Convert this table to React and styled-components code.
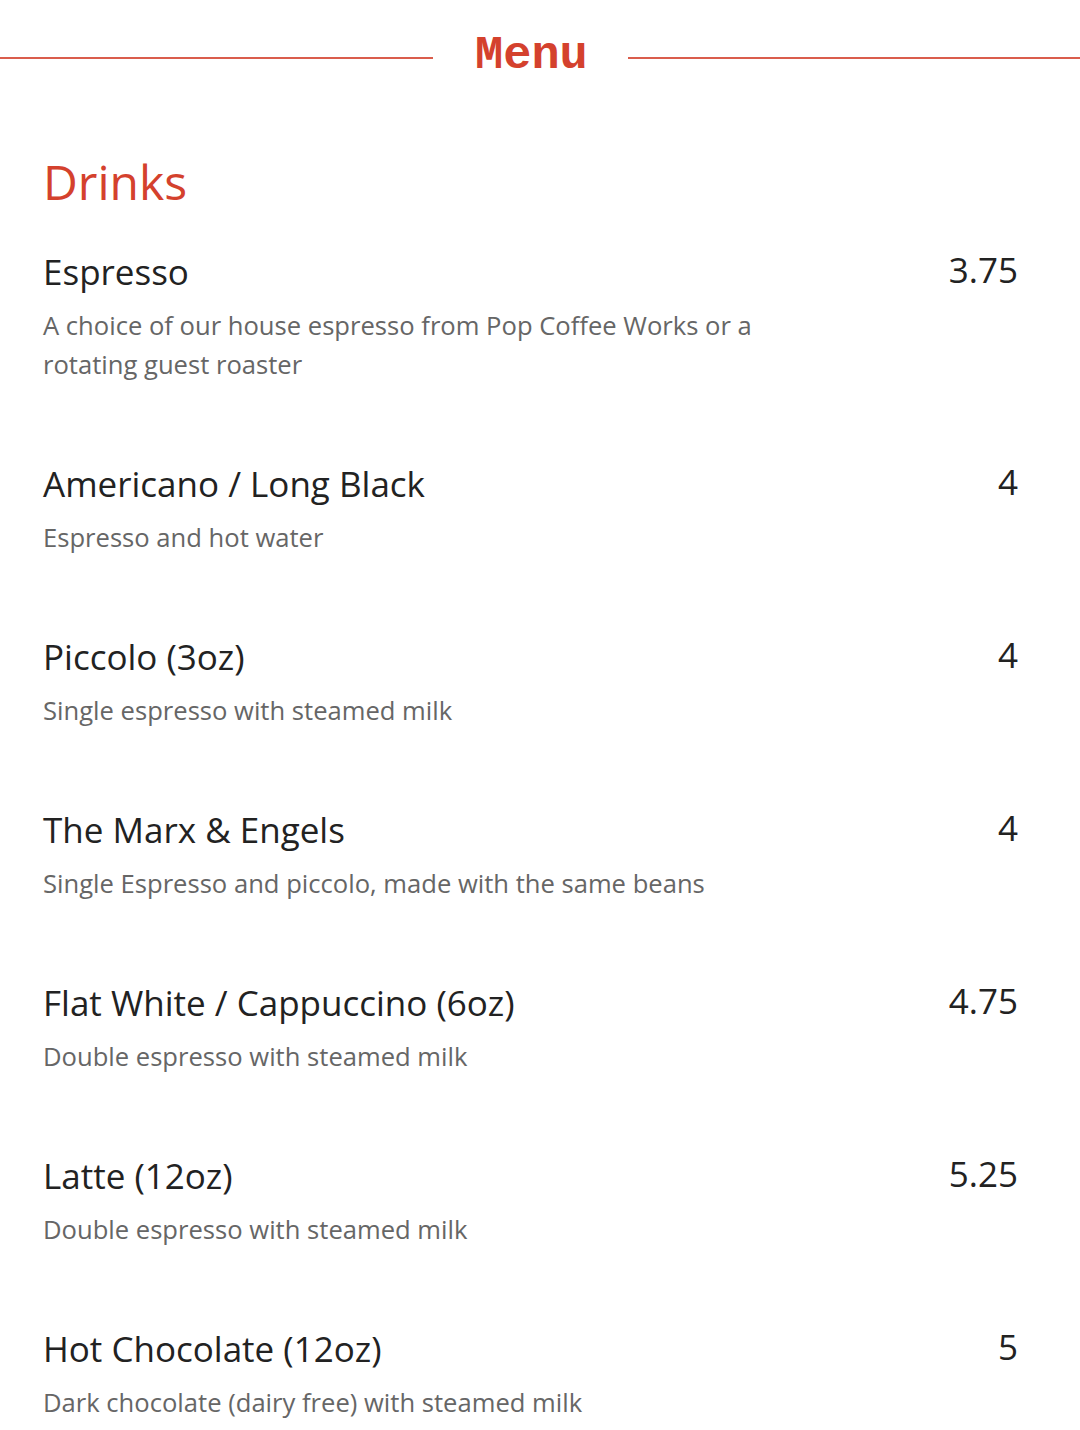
import styled, { createGlobalStyle } from "styled-components";

const GlobalStyle = createGlobalStyle`
  body {
    margin: 0;
    background: #fff;
    font-family: "Open Sans", "Liberation Sans", sans-serif;
  }
`;

const RED = "#d4412d";

const Page = styled.div`
  width: 1080px;
  min-height: 1430px;
  background: #fff;
`;

const Header = styled.header`
  display: flex;
  align-items: center;
  height: 104px;
`;

const Rule = styled.div`
  flex: ${(p) => (p.$grow ? 1 : "0 0 433px")};
  height: 2px;
  margin-top: 12px;
  background: ${RED};
  opacity: 0.85;
`;

const MenuTitle = styled.h1`
  margin: 6px 40px 0 42px;
  font-family: "Liberation Mono", "Courier New", monospace;
  font-weight: 700;
  font-size: 47px;
  line-height: 1;
  color: ${RED};
`;

const Section = styled.section`
  padding: 48px 62px 0 43px;
`;

const SectionTitle = styled.h2`
  margin: 0 0 38px;
  font-weight: 400;
  font-size: 48px;
  line-height: 60px;
  color: ${RED};
`;

const List = styled.div`
  display: flex;
  flex-direction: column;
  gap: 78px;
`;

const Item = styled.div`
  display: flex;
  justify-content: space-between;
  align-items: flex-start;
`;

const Info = styled.div`
  max-width: 740px;
`;

const Name = styled.h3`
  margin: 0 0 12px;
  font-weight: 400;
  font-size: 35px;
  line-height: 44px;
  color: #222;
`;

const Desc = styled.p`
  margin: 0;
  font-size: 25.6px;
  line-height: 39px;
  color: #666;
`;

const Price = styled.span`
  padding-top: 2px;
  font-size: 35px;
  line-height: 36px;
  color: #222;
`;

const drinks = [
  {
    name: "Espresso",
    desc: "A choice of our house espresso from Pop Coffee Works or a rotating guest roaster",
    price: "3.75",
  },
  { name: "Americano / Long Black", desc: "Espresso and hot water", price: "4" },
  { name: "Piccolo (3oz)", desc: "Single espresso with steamed milk", price: "4" },
  {
    name: "The Marx & Engels",
    desc: "Single Espresso and piccolo, made with the same beans",
    price: "4",
  },
  {
    name: "Flat White / Cappuccino (6oz)",
    desc: "Double espresso with steamed milk",
    price: "4.75",
  },
  { name: "Latte (12oz)", desc: "Double espresso with steamed milk", price: "5.25" },
  {
    name: "Hot Chocolate (12oz)",
    desc: "Dark chocolate (dairy free) with steamed milk",
    price: "5",
  },
];

export default function App() {
  return (
    <Page>
      <GlobalStyle />
      <Header>
        <Rule />
        <MenuTitle>Menu</MenuTitle>
        <Rule $grow />
      </Header>
      <Section>
        <SectionTitle>Drinks</SectionTitle>
        <List>
          {drinks.map((d) => (
            <Item key={d.name}>
              <Info>
                <Name>{d.name}</Name>
                <Desc>{d.desc}</Desc>
              </Info>
              <Price>{d.price}</Price>
            </Item>
          ))}
        </List>
      </Section>
    </Page>
  );
}
